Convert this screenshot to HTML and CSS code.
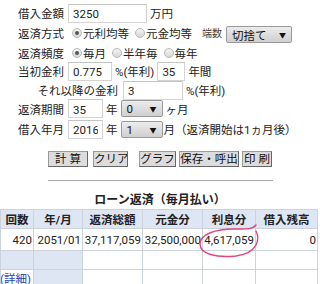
FILE: index.html
```html
<html>
<head>
    <title>ローン計算</title>
    <link rel="stylesheet" href="styles.css">
</head>
<body>
    <div class="form">
        <div class="row r1">
            <span class="label">借入金額</span>
            <input type="text" class="in w-amount" value="3250">
            <span class="unit">万円</span>
        </div>
        <div class="row r2">
            <span class="label">返済方式</span>
            <span class="radio on"></span><span class="opt">元利均等</span>
            <span class="radio"></span><span class="opt">元金均等</span>
            <span class="small">端数</span>
            <span class="select w-round">切捨て<span class="arrow">▼</span></span>
        </div>
        <div class="row r3">
            <span class="label">返済頻度</span>
            <span class="radio on"></span><span class="opt">毎月</span>
            <span class="radio"></span><span class="opt">半年毎</span>
            <span class="radio"></span><span class="opt">毎年</span>
        </div>
        <div class="row r4">
            <span class="label">当初金利</span>
            <input type="text" class="in w-rate" value="0.775">
            <span class="unit">%(年利)</span>
            <input type="text" class="in w-years" value="35">
            <span class="unit">年間</span>
        </div>
        <div class="row r5">
            <span class="label wide">それ以降の金利</span>
            <input type="text" class="in w-later" value="3">
            <span class="unit">%(年利)</span>
        </div>
        <div class="row r6">
            <span class="label">返済期間</span>
            <input type="text" class="in w-short" value="35">
            <span class="unit">年</span>
            <span class="select w-mini">0<span class="arrow">▼</span></span>
            <span class="unit">ヶ月</span>
        </div>
        <div class="row r7">
            <span class="label">借入年月</span>
            <input type="text" class="in w-short" value="2016">
            <span class="unit">年</span>
            <span class="select w-mini">1<span class="arrow">▼</span></span>
            <span class="unit tight">月（返済開始は1ヵ月後）</span>
        </div>
    </div>

    <div class="buttons">
        <input type="button" class="btn b-calc" value="計 算">
        <input type="button" class="btn b-clear" value="クリア">
        <input type="button" class="btn b-graph" value="グラフ">
        <input type="button" class="btn b-save" value="保存・呼出">
        <input type="button" class="btn b-print" value="印 刷">
    </div>

    <hr class="rule">

    <div class="title">ローン返済（毎月払い）</div>

    <div class="result">
        <table class="table">
            <colgroup>
                <col class="c1">
                <col class="c2">
                <col class="c3">
                <col class="c4">
                <col class="c5">
                <col class="c6">
            </colgroup>
            <tr class="head">
                <th>回数</th>
                <th>年/月</th>
                <th>返済総額</th>
                <th>元金分</th>
                <th>利息分</th>
                <th>借入残高</th>
            </tr>
            <tr class="data">
                <td>420</td>
                <td>2051/01</td>
                <td>37,117,059</td>
                <td>32,500,000</td>
                <td>4,617,059</td>
                <td>0</td>
            </tr>
            <tr class="empty">
                <td class="shade"></td>
                <td class="shade"></td>
                <td></td>
                <td></td>
                <td></td>
                <td></td>
            </tr>
            <tr class="more">
                <td><a href="#">(詳細)</a></td>
                <td class="shade"></td>
                <td></td>
                <td></td>
                <td></td>
                <td></td>
            </tr>
        </table>
        <svg class="mark" width="70" height="40" viewBox="0 0 70 40">
            <path d="M60 8 C64 16, 62 30, 40 33 C20 35, 4 31, 4 21 C4 11, 20 6, 38 6 C48 6, 56 7, 60 2"
                  fill="none" stroke="#e2467f" stroke-width="1.4" stroke-linecap="round"/>
        </svg>
    </div>
</body>
</html>
```

FILE: styles.css
```css
body {
    margin: 0;
    font-family: Roboto, "Noto Sans CJK JP", sans-serif;
    font-size: 11.5px;
    color: #222;
    background-color: white;
    width: 320px;
    height: 284px;
    overflow: hidden;
}

.form {
    padding-top: 3px;
}

.row {
    display: flex;
    align-items: center;
}

.r1 { height: 20px; }
.r2 { height: 20px; }
.r3 { height: 19px; }
.r4 { height: 18px; }
.r5 { height: 20px; }
.r6 { height: 17px; }
.r7 { height: 24px; }

.label {
    width: 64px;
    text-align: right;
    margin-right: 4px;
    white-space: nowrap;
}

.label.wide {
    width: 118px;
    margin-right: 5px;
}

.in {
    height: 19px;
    box-sizing: border-box;
    border: 1px solid #d4d4d4;
    border-top-color: #c4c4c4;
    padding: 2px 4px 0 4px;
    font-family: Roboto, "Noto Sans CJK JP", sans-serif;
    font-size: 11.5px;
    color: #222;
    background: white;
    margin: 0;
}

.w-amount { width: 79px; }
.w-rate { width: 44px; }
.w-years { width: 28px; margin-left: 3px; }
.w-later { width: 60px; }
.w-short { width: 35px; }

.unit {
    margin-left: 3px;
    white-space: nowrap;
}

.unit.tight {
    margin-left: 1px;
}

.radio {
    width: 10px;
    height: 10px;
    box-sizing: border-box;
    border: 1px solid #b8b8b8;
    border-radius: 50%;
    background: linear-gradient(#f4f4f4, #d8d8d8);
    margin: 0 1px 0 4px;
    position: relative;
}

.radio.on::after {
    content: "";
    position: absolute;
    left: 2px;
    top: 2px;
    width: 4px;
    height: 4px;
    border-radius: 50%;
    background: #555;
}

.opt {
    margin-right: 2px;
    white-space: nowrap;
}

.small {
    font-size: 10px;
    color: #444;
    margin-left: 8px;
    margin-right: 4px;
    align-self: flex-start;
    margin-top: 2px;
}

.select {
    display: flex;
    align-items: center;
    justify-content: space-between;
    box-sizing: border-box;
    height: 17px;
    padding: 1px 5px 0 5px;
    border: 1px solid #9a9a9a;
    border-radius: 2px;
    background: linear-gradient(#ececec, #cfcfcf);
    color: #111;
}

.w-round {
    width: 66px;
    margin-top: 3px;
}

.w-mini {
    width: 42px;
    margin-left: 3px;
}

.arrow {
    font-size: 7px;
}

.buttons {
    display: flex;
    justify-content: center;
    gap: 3px;
    margin-top: 10px;
}

.btn {
    height: 16px;
    padding: 0;
    margin: 0;
    font-family: Roboto, "Noto Sans CJK JP", sans-serif;
    font-size: 11.5px;
    line-height: 14px;
    color: #111;
    background: #dcdcdc;
    border: 1px solid #9a9a9a;
    border-right-color: #666;
    border-bottom-color: #666;
    border-radius: 0;
}

.b-calc { width: 40px; }
.b-clear { width: 35px; margin-left: 2px; }
.b-graph { width: 37px; margin-left: 8px; }
.b-save { width: 60px; }
.b-print { width: 30px; }

.rule {
    width: 225px;
    margin: 13px auto 0 auto;
    border: none;
    border-top: 1px solid #a8a8a8;
    height: 0;
}

.title {
    text-align: center;
    font-weight: bold;
    font-size: 12px;
    margin-top: 9px;
    height: 19px;
}

.result {
    position: relative;
}

.table {
    border-collapse: collapse;
    width: 317px;
    table-layout: fixed;
    font-size: 11.5px;
}

.c1 { width: 33px; }
.c2 { width: 49px; }
.c3 { width: 60px; }
.c4 { width: 60px; }
.c5 { width: 53px; }
.c6 { width: 62px; }

.table th,
.table td {
    border: 1px solid #cdd3dc;
    padding: 0 1px;
    white-space: nowrap;
    overflow: hidden;
}

.head th {
    background: #dfe6f3;
    height: 19px;
    font-weight: bold;
    color: #222;
}

.data td {
    height: 22px;
    text-align: right;
}

.empty td {
    height: 19px;
}

.more td {
    height: 14px;
    vertical-align: top;
}

.shade {
    background: #dfe6f3;
}

.more a {
    color: #2b3fb8;
    text-decoration: none;
    position: relative;
    left: -2px;
}

.mark {
    position: absolute;
    left: 196px;
    top: 14px;
}
```
